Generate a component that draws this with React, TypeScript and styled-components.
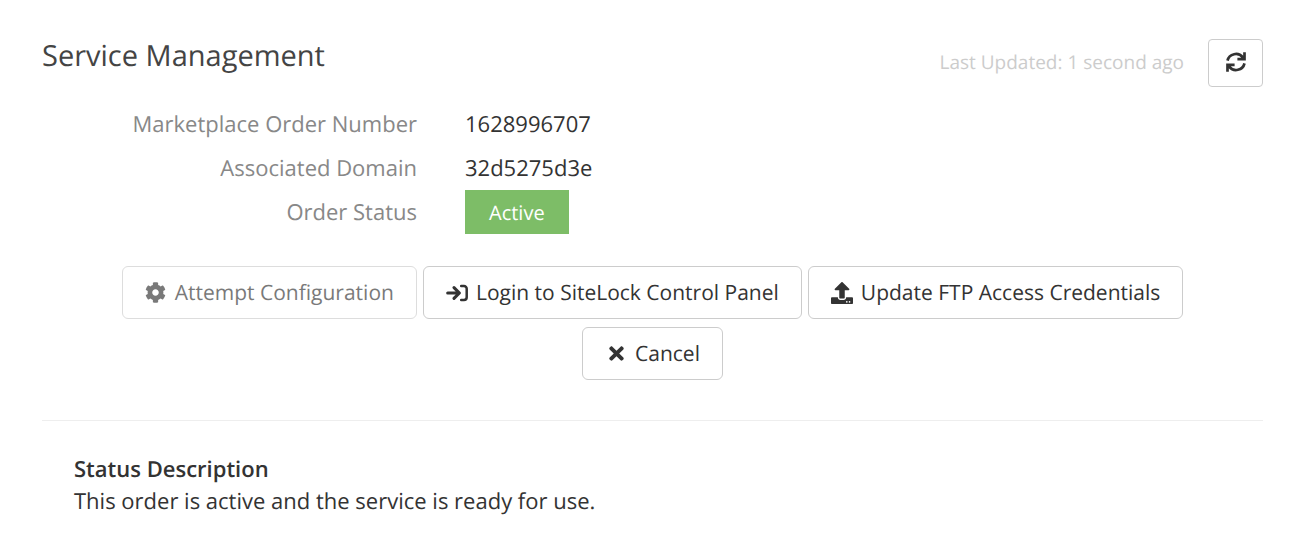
import React from "react";
import styled, { createGlobalStyle } from "styled-components";
import { FaCog, FaTimes, FaUpload } from "react-icons/fa";

const GlobalStyle = createGlobalStyle`
  *, *::before, *::after { box-sizing: border-box; }
  body {
    margin: 0;
    background: #fff;
    color: #333;
    font-family: "Open Sans", "Noto Sans", sans-serif;
    font-size: 22px;
    line-height: 32px;
    text-rendering: geometricPrecision;
  }
`;

const Panel = styled.main`
  padding: 39px 39px 0 42px;
`;

const Header = styled.header`
  display: flex;
  align-items: flex-start;
  justify-content: space-between;
`;

const Title = styled.h1`
  margin: 0;
  color: #444;
  font-size: 29px;
  font-weight: 400;
  line-height: 34px;
`;

const Updated = styled.div`
  display: flex;
  align-items: center;
  gap: 24px;
  color: #ccc;
  font-size: 19px;
  line-height: 24px;
`;

const UpdatedText = styled.span`
  padding-bottom: 2px;
`;

const Button = styled.button`
  display: inline-flex;
  align-items: center;
  justify-content: center;
  gap: 8px;
  height: 53px;
  padding: 0 22px;
  border: 1px solid #ccc;
  border-radius: 6px;
  background: #fff;
  color: #333;
  font: inherit;
  font-size: 21px;
  line-height: 32px;
  text-rendering: inherit;
  cursor: pointer;

  &:disabled {
    opacity: 0.65;
    cursor: not-allowed;
  }
`;

const RefreshButton = styled(Button)`
  width: 55px;
  height: 48px;
  padding: 0 0 2px;
  border-radius: 4px;
`;

const IconSlot = styled.span`
  display: inline-flex;
  align-items: center;
  justify-content: center;
  width: 22px;
  height: 22px;
`;

const Details = styled.dl`
  display: grid;
  grid-template-columns: 1fr 2fr;
  grid-auto-rows: 44px;
  margin: 13px 0 0;
  padding-top: 2px;
  line-height: 44px;
`;

const Term = styled.dt`
  padding-right: 32px;
  color: #888;
  text-align: right;
`;

const Value = styled.dd`
  margin: 0;
  padding-left: 16px;
`;

const StatusBadge = styled.span`
  display: inline-block;
  padding: 2px 24px 0;
  background: #7dbd67;
  color: #fff;
  font-size: 20px;
  line-height: 42px;
  vertical-align: top;
`;

const Actions = styled.div`
  display: flex;
  flex-wrap: wrap;
  justify-content: center;
  gap: 8px 6px;
  padding: 32px 32px 40px;
`;

const Description = styled.section`
  padding: 32px 32px 0;
  border-top: 1px solid #eee;
`;

const Subtitle = styled.h2`
  margin: 0;
  font-size: 22px;
  font-weight: 600;
  line-height: 32px;
`;

const Text = styled.p`
  margin: 0;
`;

function SignInIcon() {
  return (
    <svg width="22" height="22" viewBox="0 0 22 22" fill="none" stroke="currentColor" strokeWidth="3.1" strokeLinecap="round" strokeLinejoin="round" aria-hidden="true">
      <path d="M1.7 11H12.4M8 5.6 13.4 11 8 16.4" />
      <path d="M15.2 4h2.8a2.7 2.7 0 0 1 2.7 2.7v8.6a2.7 2.7 0 0 1-2.7 2.7h-2.8" strokeWidth="2.5" />
    </svg>
  );
}

function RefreshIcon() {
  return (
    <svg width="20" height="20" viewBox="0 0 20 20" fill="none" stroke="currentColor" strokeWidth="2.7" aria-hidden="true">
      <path d="M1.5 8.6A8.6 8.4 0 0 1 16.8 5.4" />
      <path d="M18.5 11.4A8.6 8.4 0 0 1 3.2 14.6" />
      <path d="M18.5 0.3V7.2H11.4" />
      <path d="M1.5 19.7V12.8H8.6" />
      <path d="M18.6 7.6V3.6L15.6 4 14.2 7.6ZM1.4 12.4V16.4L4.4 16 5.8 12.4Z" fill="currentColor" stroke="none" />
    </svg>
  );
}

export default function App() {
  return (
    <>
      <GlobalStyle />
      <Panel>
        <Header>
          <Title>Service Management</Title>
          <Updated>
            <UpdatedText>Last Updated: 1 second ago</UpdatedText>
            <RefreshButton type="button" aria-label="Refresh">
              <RefreshIcon />
            </RefreshButton>
          </Updated>
        </Header>
        <Details>
          <Term>Marketplace Order Number</Term>
          <Value>1628996707</Value>
          <Term>Associated Domain</Term>
          <Value>32d5275d3e</Value>
          <Term>Order Status</Term>
          <Value>
            <StatusBadge>Active</StatusBadge>
          </Value>
        </Details>
        <Actions>
          <Button type="button" disabled>
            <IconSlot><FaCog size={21} /></IconSlot>
            Attempt Configuration
          </Button>
          <Button type="button">
            <IconSlot><SignInIcon /></IconSlot>
            Login to SiteLock Control Panel
          </Button>
          <Button type="button">
            <IconSlot><FaUpload size={22} /></IconSlot>
            Update FTP Access Credentials
          </Button>
          <Button type="button">
            <IconSlot><FaTimes size={21} /></IconSlot>
            Cancel
          </Button>
        </Actions>
        <Description>
          <Subtitle>Status Description</Subtitle>
          <Text>This order is active and the service is ready for use.</Text>
        </Description>
      </Panel>
    </>
  );
}
